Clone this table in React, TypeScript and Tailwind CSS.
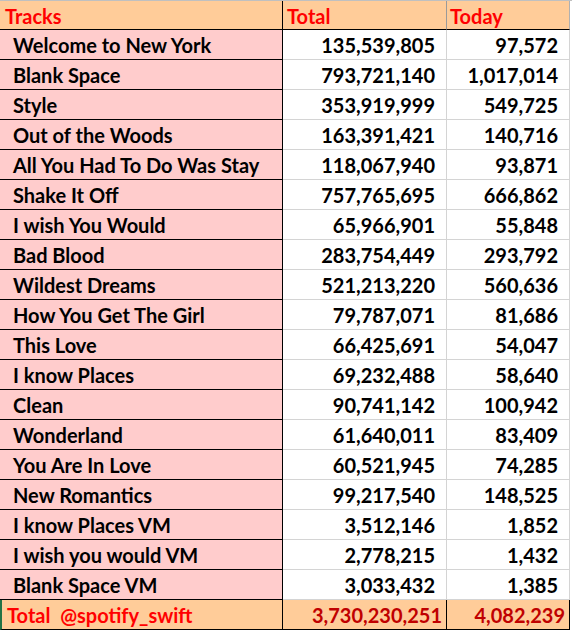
import React from 'react';

const rows: [string, string, string][] = [
  ['Welcome to New York', '135,539,805', '97,572'],
  ['Blank Space', '793,721,140', '1,017,014'],
  ['Style', '353,919,999', '549,725'],
  ['Out of the Woods', '163,391,421', '140,716'],
  ['All You Had To Do Was Stay', '118,067,940', '93,871'],
  ['Shake It Off', '757,765,695', '666,862'],
  ['I wish You Would', '65,966,901', '55,848'],
  ['Bad Blood', '283,754,449', '293,792'],
  ['Wildest Dreams', '521,213,220', '560,636'],
  ['How You Get The Girl', '79,787,071', '81,686'],
  ['This Love', '66,425,691', '54,047'],
  ['I know Places', '69,232,488', '58,640'],
  ['Clean', '90,741,142', '100,942'],
  ['Wonderland', '61,640,011', '83,409'],
  ['You Are In Love', '60,521,945', '74,285'],
  ['New Romantics', '99,217,540', '148,525'],
  ['I know Places VM', '3,512,146', '1,852'],
  ['I wish you would VM', '2,778,215', '1,432'],
  ['Blank Space VM', '3,033,432', '1,385'],
];

const App: React.FC = () => {
  return (
    <div className="w-[572px] h-[632px] bg-white font-['Lato','Liberation_Sans',sans-serif] font-bold text-[20px] leading-none text-black">
      {/* Header */}
      <div className="flex h-[30px] border-t border-[#c0c0c0] bg-white">
        <div className="w-[283px] flex items-center pl-[5px] pt-[2px] bg-[#ffcc99] text-[#ff0000] border-r border-b border-black">Tracks</div>
        <div className="w-[164px] flex items-center pl-[4px] pt-[2px] bg-[#ffcc99] text-[#ff0000] border-r border-b border-r-[#9a9a9a] border-b-black">Total</div>
        <div className="w-[123px] flex items-center pl-[3px] pt-[2px] bg-[#ffcc99] text-[#ff0000] border-r border-b border-r-[#b0b0b0] border-b-black">Today</div>
      </div>

      {/* Tracks */}
      {rows.map(([name, total, today]) => (
        <div key={name} className="flex h-[30px]">
          <div className="w-[283px] flex items-center pl-[13px] pt-[1px] bg-[#ffcccc] border-r border-b border-black">{name}</div>
          <div className="w-[164px] flex items-center justify-end pr-[11px] pt-[1px] border-r border-b border-[#d4d4d4]">{total}</div>
          <div className="w-[123px] flex items-center justify-end pr-[11px] pt-[1px] border-r border-b border-[#d4d4d4]">{today}</div>
        </div>
      ))}

      {/* Total */}
      <div className="flex h-[30px]">
        <div className="w-[283px] flex items-center pl-[5px] pt-[1px] bg-[#ffcc99] text-[#ff0000] border-l-2 border-l-[#217346] border-r border-b border-r-black border-b-black">Total&nbsp;&nbsp;@spotify_swift</div>
        <div className="w-[164px] flex items-center justify-end pr-[4px] pt-[1px] bg-[#ffcc99] text-[#c00000] border-r border-b border-black">3,730,230,251</div>
        <div className="w-[123px] flex items-center justify-end pr-[4px] pt-[1px] bg-[#ffcc99] text-[#c00000] border-r border-b border-black">4,082,239</div>
      </div>
    </div>
  );
};

export default App;
